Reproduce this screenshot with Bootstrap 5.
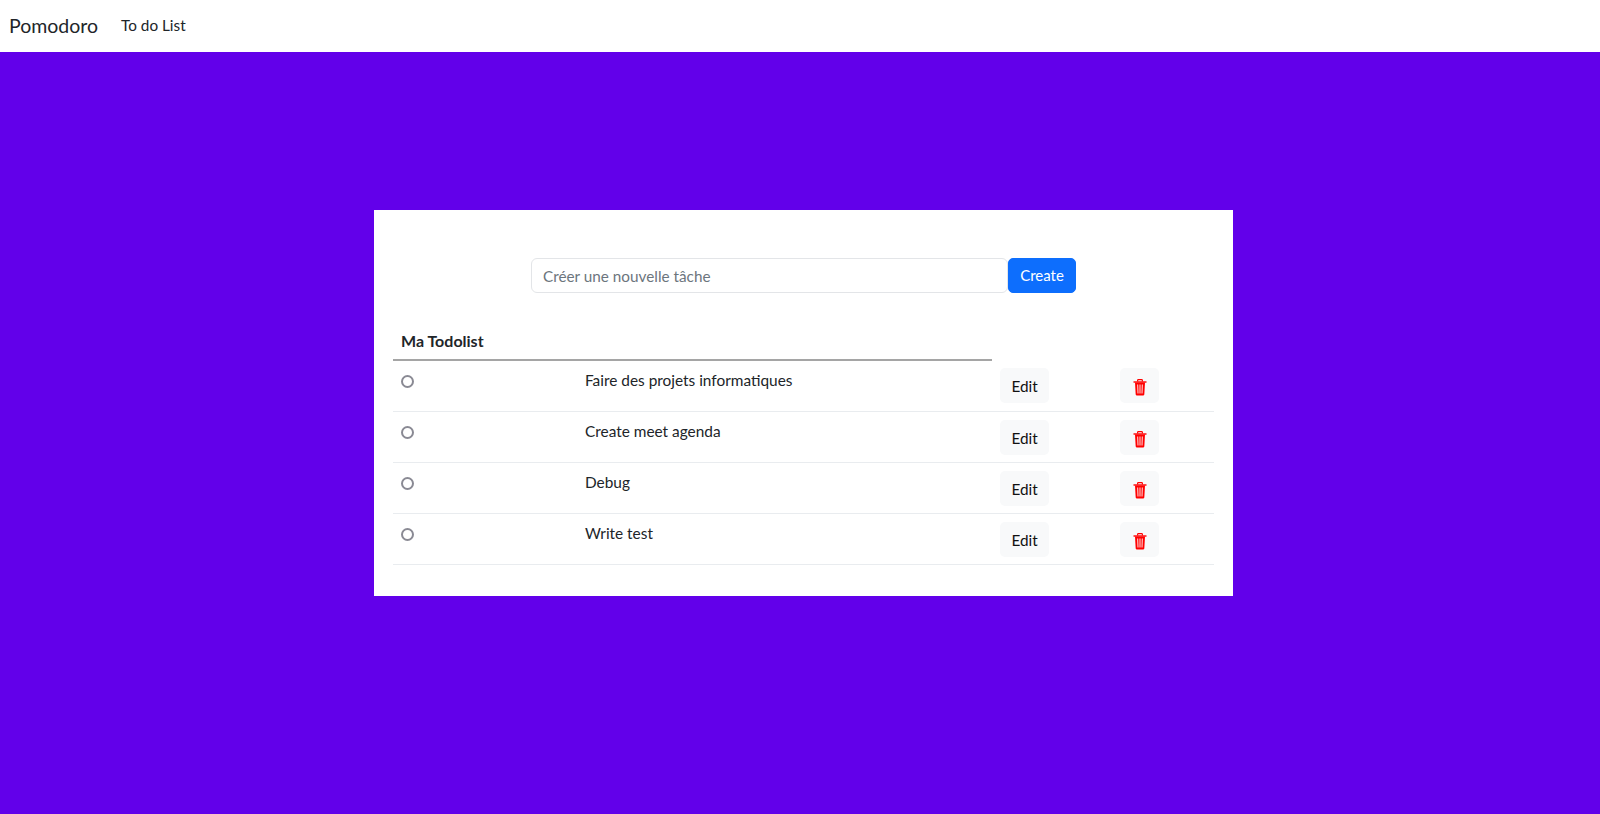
<!DOCTYPE html>
<html lang="fr">
<head>
    <meta charset="UTF-8">
    <meta name="viewport" content="width=device-width, initial-scale=1.0">
    <title>Pomodoro</title>
    <link href="https://cdn.jsdelivr.net/npm/bootstrap@5.3.0/dist/css/bootstrap.min.css" rel="stylesheet">
    <style>
        body { background-color: #6200ea; min-height: 814px; font-family: "Lato", "Liberation Sans", sans-serif; font-size: 15.4px; color: #212529; }
        .top-bar { height: 52px; padding: 0 9px; }
        .top-bar .navbar-brand { font-size: 19.5px; margin-right: 15px; color: #212529; padding: 0; }
        .top-bar .nav-link { font-size: 15.3px; color: #212529; padding: 0 8px 2px; }
        .todo-panel { width: 859px; margin: 158px 0 0 374px; padding: 48px 19px 31px; background: #fff; }
        .todo-form { width: 545px; margin: 0 auto 27px; }
        .todo-form .form-control { height: 35px; padding: 0 11px; font-size: 15.3px; border-color: #e3e5e8; }
        .todo-form .form-control::placeholder { color: #6c757d; }
        .todo-form .btn { height: 35px; width: 68px; flex: none; padding: 0; font-size: 15px; border-radius: 5px; }
        .todo-table { table-layout: fixed; width: 821px; margin: 0; }
        .todo-table th, .todo-table td { padding: 8px 8px 7px; line-height: 22px; vertical-align: top; }
        .todo-table thead th { height: 40px; padding-top: 10px; border-bottom: 0; }
        .todo-table thead th.head-title { border-bottom: 2px solid #a5a5a5; font-size: 16px; font-weight: 700; }
        .todo-table tbody { border-top: 0 !important; }
        .todo-table tbody td { height: 51px; border-bottom: 1px solid #e9ecef; }
        .col-check { width: 184px; }
        .col-name { width: 415px; }
        .col-edit { width: 120px; }
        .todo-radio { appearance: none; width: 13px; height: 13px; margin: 6px 0 0; display: block; border: 2px solid #8a8a94; border-radius: 50%; background: #fff; }
        .row-btn { height: 35px; padding: 0; font-size: 15.3px; border: 0; background: #f8f9fa; border-radius: 5px; display: flex; align-items: center; justify-content: center; }
        .btn-edit { width: 49px; color: #111; padding-top: 1px; }
        .btn-trash { width: 39px; padding-top: 4px; }
    </style>
</head>
<body>
    <nav class="navbar navbar-expand bg-white top-bar">
        <a class="navbar-brand" href="#">Pomodoro</a>
        <ul class="navbar-nav">
            <li class="nav-item"><a class="nav-link" href="#">To do List</a></li>
        </ul>
    </nav>

    <div class="todo-panel">
        <form class="d-flex todo-form">
            <input type="text" class="form-control" placeholder="Créer une nouvelle tâche">
            <button type="button" class="btn btn-primary">Create</button>
        </form>

        <table class="table todo-table">
            <colgroup>
                <col class="col-check">
                <col class="col-name">
                <col class="col-edit">
                <col>
            </colgroup>
            <thead>
                <tr>
                    <th colspan="2" class="head-title">Ma Todolist</th>
                    <th></th>
                    <th></th>
                </tr>
            </thead>
            <tbody id="todo-body"></tbody>
        </table>
    </div>

    <script src="https://cdn.jsdelivr.net/npm/bootstrap@5.3.0/dist/js/bootstrap.bundle.min.js"></script>
    <script>
        const todos = ['Faire des projets informatiques', 'Create meet agenda', 'Debug', 'Write test'];
        const trashIcon = `
            <svg width="14" height="17" viewBox="0 0 14 17" fill="none" stroke="#f00">
                <path d="M4.6 2.5V1.5a.8.8 0 0 1 .8-.8h3.2a.8.8 0 0 1 .8.8v1" stroke-width="1.2"/>
                <path d="M.5 3h13" stroke-width="1.4"/>
                <path d="M2 3.6h10l-.7 12a.9.9 0 0 1-.9.8H3.6a.9.9 0 0 1-.9-.8z" fill="#f00" stroke="none"/>
                <path d="M4.7 5.5l.3 9M7 5.5v9M9.3 5.5l-.3 9" stroke="#fff" stroke-width=".9"/>
            </svg>`;

        const tableBody = document.getElementById('todo-body');
        todos.forEach(todo => {
            const row = document.createElement('tr');
            row.innerHTML = `
                <td><input type="radio" class="todo-radio"></td>
                <td>${todo}</td>
                <td><button type="button" class="row-btn btn-edit">Edit</button></td>
                <td><button type="button" class="row-btn btn-trash">${trashIcon}</button></td>
            `;
            tableBody.appendChild(row);
        });
    </script>
</body>
</html>
